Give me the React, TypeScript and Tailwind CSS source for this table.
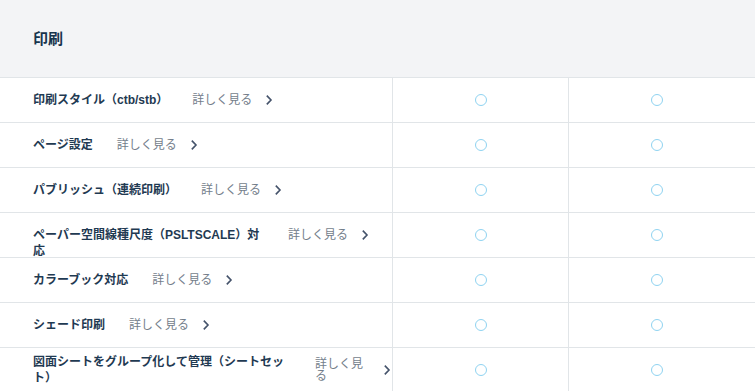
const rows: { label: string; labelW?: string; clip?: boolean; linkW?: string }[] = [
  { label: "印刷スタイル（ctb/stb）" },
  { label: "ページ設定" },
  { label: "パブリッシュ（連続印刷）" },
  { label: "ペーパー空間線種尺度（PSLTSCALE）対応", labelW: "w-[231px]", clip: true },
  { label: "カラーブック対応" },
  { label: "シェード印刷" },
  { label: "図面シートをグループ化して管理（シートセット）", labelW: "w-[258px]", linkW: "w-[55px]" },
];

function Chevron() {
  return (
    <svg width="8" height="12" viewBox="0 0 8 12" className="shrink-0 text-[#44526a]">
      <path d="M1.8 1.6 6 6l-4.2 4.4" fill="none" stroke="currentColor" strokeWidth="1.6" />
    </svg>
  );
}

function Mark() {
  return <span className="block w-3 h-3 rounded-full border-[1.5px] border-[#8fd3f1]" />;
}

export default function App() {
  return (
    <div
      className="w-[755px] h-[391px] overflow-hidden bg-white"
      style={{ fontFamily: '"Liberation Sans", "Noto Sans CJK JP", sans-serif' }}
    >
      <div className="h-[77px] bg-[#f3f4f6] flex items-center pl-[33px]">
        <h2 className="text-[15px] font-bold text-[#17344d] leading-5">印刷</h2>
      </div>

      {rows.map((r) => (
        <div key={r.label} className="flex h-[45px] border-t border-[#e1e5e8]">
          <div className="w-[392px] flex items-center pl-[33px] shrink-0">
            <span
              className={`${r.labelW ?? ""} ${r.clip ? "h-4" : ""} shrink-0 block text-xs font-bold leading-4 text-[#1f3a52]`}
            >
              {r.label}
            </span>
            <a className="ml-6 flex items-center gap-[13px] cursor-pointer">
              <span className={`${r.linkW ?? ""} block text-xs leading-3 text-[#747e8b]`}>詳しく見る</span>
              <Chevron />
            </a>
          </div>
          <div className="w-[176px] shrink-0 border-l border-[#e1e5e8] flex items-center justify-center">
            <Mark />
          </div>
          <div className="flex-1 border-l border-[#e1e5e8] flex items-center justify-center pr-[11px]">
            <Mark />
          </div>
        </div>
      ))}
    </div>
  );
}
